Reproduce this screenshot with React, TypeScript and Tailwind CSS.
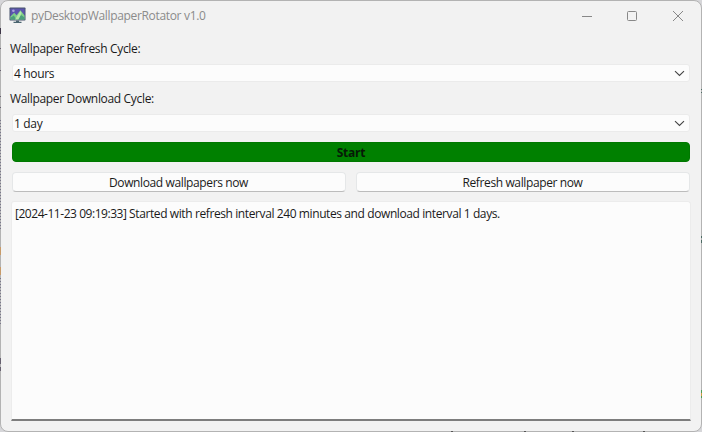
import React from "react";

function AppIcon() {
  return (
    <svg width="17" height="17" viewBox="0 0 17 17" className="mb-0.5 shrink-0">
      <rect x="0.5" y="0.5" width="16" height="13" rx="0.8" fill="#46536b" />
      <rect x="1.4" y="1.5" width="14.2" height="11" fill="#5c55ae" />
      <circle cx="4.4" cy="3.8" r="1.3" fill="#a9a4dc" />
      <path d="M1.4 9.4 5.2 5.8l2.4 2.4 3.8-5 4.2 5.2v4.1H1.4z" fill="#7fcf88" />
      <path d="M1.4 12.5v-1.8l3.4-2.2 2.6 4zM9 12.5l3-4.5 3.6 2.6v1.9z" fill="#4ca07c" />
      <path d="m6 12.5 5.4-8.4 1.2 2-3.2 6.4z" fill="#b4e8a8" />
      <path d="M7 13.5h3v1.3h2.5V16h-8v-1.2H7z" fill="#4b6570" />
    </svg>
  );
}

// Specks of the desktop that show along the window's outer edge.
function DesktopSpecks() {
  return (
    <svg width="702" height="432" viewBox="0 0 702 432" className="pointer-events-none absolute inset-0">
      <path d="M.5 28v6" stroke="#3d3547" />
      <path d="M.5 48v1M.5 70v1M.5 96v1M.5 107v1M.5 358v6M.5 367v4" stroke="#66606f" />
      <path d="M.5 120v110M.5 278v46" stroke="#77758a" strokeDasharray="1 2" />
      <path d="M.5 247v8M.5 267v8" stroke="#c79a68" />
      <path d="M701.5 89v1M701.5 92v1M701.5 236v2M701.5 240v3" stroke="#4b6a63" />
      <path d="M701.5 390v3M701.5 396v2" stroke="#4c9a58" />
      <path d="M701.5 393v3" stroke="#d19a45" />
      <path d="M451 431.5h2M524 431.5h2M572 431.5h2M643 431.5h2" stroke="#555" />
    </svg>
  );
}

function Combo({ value }: { value: string }) {
  return (
    <div className="mx-[3px] flex h-[18px] items-center justify-between rounded-[3px] border border-[#ebebeb] bg-[#fcfcfc] pr-[4px] pl-px">
      <span className="pt-[2px] leading-[16px]">{value}</span>
      <svg width="11" height="7" viewBox="0 0 11 7" fill="none" stroke="#444" strokeWidth="1.1" className="mt-px">
        <path d="m1 1.2 4.5 4.3L10 1.2" />
      </svg>
    </div>
  );
}

function PushButton({ label }: { label: string }) {
  return (
    <button className="flex h-5 flex-1 items-center justify-center rounded-[4px] border border-[#e5e7e8] border-b-[#bcbcbc] bg-[#fcfcfc] leading-[18px] tracking-[-0.38px]">
      <span className="pt-[2px] pr-px">{label}</span>
    </button>
  );
}

export default function App() {
  return (
    <div className="relative h-[432px] w-[702px] overflow-hidden bg-[#d6d6d9] font-['Open_Sans','Noto_Sans',sans-serif] text-[12px] tracking-[-0.33px] text-[#1a1a1a]">
      <div className="flex h-[432px] flex-col rounded-[8px] border border-[#b3b3b3] bg-[#f2f2f2]">
        <header className="flex h-[29px] items-center pt-px pl-2 text-[#8b8b8b]">
          <AppIcon />
          <span className="ml-[5px] grow leading-[18px]">pyDesktopWallpaperRotator v1.0</span>
          <svg width="110" height="12" viewBox="0 0 110 12" fill="none" stroke="#888" className="mr-[14px] mb-px shrink-0">
            <path d="M5 6.5h10" />
            <rect x="50.5" y="1.5" width="9" height="9" rx="1" />
            <path d="m96 1 10 10M106 1 96 11" />
          </svg>
        </header>
        <main className="flex flex-1 flex-col px-2 pt-[11px] pb-[10px]">
          <div className="ml-px h-[16px] leading-[16px]">Wallpaper Refresh Cycle:</div>
          <div className="mt-[7px]"><Combo value="4 hours" /></div>
          <div className="mt-[9px] ml-px h-[16px] leading-[16px]">Wallpaper Download Cycle:</div>
          <div className="mt-[7px]"><Combo value="1 day" /></div>
          <button className="mx-[3px] mt-[10px] h-5 shrink-0 rounded-[4px] border border-[#007800] bg-[#008000] leading-[19px] font-bold tracking-[-0.22px] text-[#071a07]">Start</button>
          <div className="mx-[3px] mt-[10px] flex gap-[10px]">
            <PushButton label="Download wallpapers now" />
            <PushButton label="Refresh wallpaper now" />
          </div>
          <div className="mx-[2px] mt-[9px] flex-1 rounded-t-[3px] border border-b-2 border-[#ececec] border-b-[#7d7d7d] bg-[#fcfcfc] px-[3px] pt-[4px] leading-[16px] tracking-[-0.4px]">
            <span className="tracking-[-0.46px]">[2024-11-23 09:19:33]</span> Started with refresh interval 240 minutes and download interval 1 days.
          </div>
        </main>
      </div>
      <DesktopSpecks />
    </div>
  );
}
